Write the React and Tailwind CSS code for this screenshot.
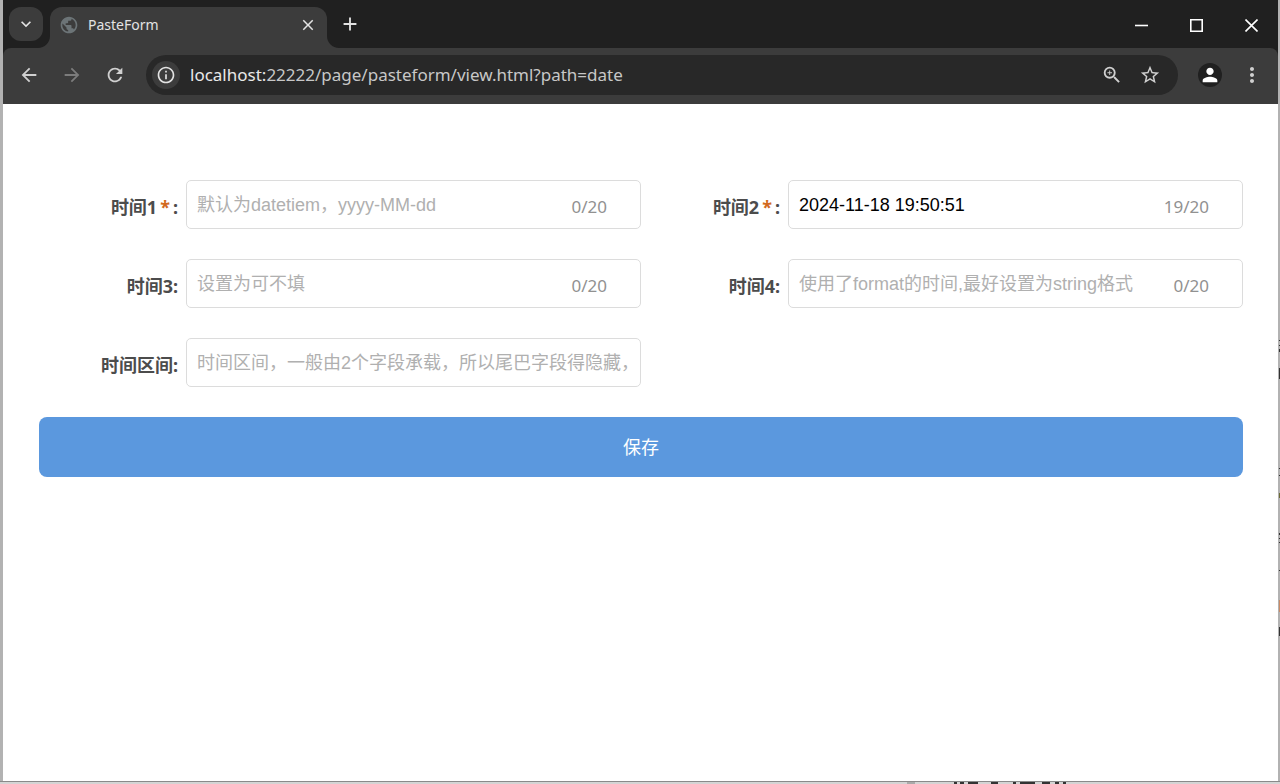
import { useState } from 'react';
import {
    MdAdd,
    MdArrowBack,
    MdArrowForward,
    MdClose,
    MdInfoOutline,
    MdKeyboardArrowDown,
    MdMoreVert,
    MdPerson,
    MdPublic,
    MdRefresh,
    MdStarOutline,
    MdZoomIn,
} from 'react-icons/md';

const FIELDS = [
    { name: 'time1', label: '时间1', required: true, placeholder: '默认为datetiem，yyyy-MM-dd', max: 20 },
    { name: 'time2', label: '时间2', required: true, value: '2024-11-18 19:50:51', max: 20 },
    { name: 'time3', label: '时间3', placeholder: '设置为可不填', max: 20 },
    { name: 'time4', label: '时间4', placeholder: '使用了format的时间,最好设置为string格式', max: 20 },
    { name: 'range', label: '时间区间', placeholder: '时间区间，一般由2个字段承载，所以尾巴字段得隐藏，时间' },
];

// Flared foot on either side of the active tab
const TabFoot = ({ flip }) => (
    <svg
        viewBox="0 0 12 12"
        className={flip ? 'size-3 self-end -scale-x-100' : 'size-3 self-end'}
        aria-hidden="true"
    >
        <path d="M12 0v12H0C6.6 12 12 6.6 12 0z" fill="#3c3c3c" />
    </svg>
);

const TitleBar = () => (
    <div className="flex h-12 bg-[#202020] pt-[7px] pl-[6px] text-[#e3e3e3]">
        <button
            type="button"
            aria-label="Search tabs"
            className="flex size-[34px] items-center justify-center rounded-xl bg-[#3c3c3c]"
        >
            <MdKeyboardArrowDown className="size-5" />
        </button>
        <div className="-ml-[5px] flex">
            <TabFoot />
            <div className="flex w-[277px] items-center rounded-t-xl bg-[#3c3c3c] pr-[10px] pb-[6px] pl-[9px]">
                <MdPublic className="size-5 text-[#6c7477]" />
                <span className="ml-[9px] flex-1 text-[14px] leading-5">PasteForm</span>
                <button type="button" aria-label="Close tab">
                    <MdClose className="size-[18px]" />
                </button>
            </div>
            <TabFoot flip />
        </div>
        <button type="button" aria-label="New tab" className="mb-[7px]">
            <MdAdd className="size-[22px]" />
        </button>
        <div className="ml-auto flex items-center gap-[42px] pr-5 pb-[5px] text-white">
            <button type="button" aria-label="Minimize">
                <svg viewBox="0 0 13 13" className="size-[13px]" stroke="currentColor" strokeWidth="1.6">
                    <path d="M0 6.5h13" />
                </svg>
            </button>
            <button type="button" aria-label="Maximize">
                <svg viewBox="0 0 13 13" className="size-[13px]" fill="none" stroke="currentColor" strokeWidth="1.6">
                    <path d="M.8.8h11.4v11.4H.8z" />
                </svg>
            </button>
            <button type="button" aria-label="Close">
                <svg viewBox="0 0 13 13" className="size-[13px]" stroke="currentColor" strokeWidth="1.6">
                    <path d="M.5.5l12 12M12.5.5l-12 12" />
                </svg>
            </button>
        </div>
    </div>
);

const Toolbar = () => (
    <div className="bg-[#202020]">
        <div className="flex h-14 items-center rounded-t-lg bg-[#3c3c3c] pr-[14px] pb-[2px] pl-[15px] text-[#d0d0d0]">
            <div className="flex gap-[21px]">
                <button type="button" aria-label="Back">
                    <MdArrowBack className="size-[22px]" />
                </button>
                <button type="button" aria-label="Forward" disabled className="text-[#7c7c7c]">
                    <MdArrowForward className="size-[22px]" />
                </button>
                <button type="button" aria-label="Reload">
                    <MdRefresh className="size-[22px]" />
                </button>
            </div>
            <div className="ml-5 flex h-10 flex-1 items-center rounded-full bg-[#282828] pr-[17px] pl-[6px]">
                <span className="flex size-7 items-center justify-center rounded-full bg-[#3c3c3c]">
                    <MdInfoOutline className="size-5 text-[#e3e3e3]" />
                </span>
                <p className="ml-[10px] flex-1 text-[17px] leading-6 text-[#c7c7c7]">
                    <span className="text-[#e8e8e8]">localhost:</span>
                    22222/page/pasteform/view.html?path=date
                </p>
                <div className="flex gap-4">
                    <button type="button" aria-label="Zoom">
                        <MdZoomIn className="size-[22px]" />
                    </button>
                    <button type="button" aria-label="Bookmark this tab">
                        <MdStarOutline className="size-[22px]" />
                    </button>
                </div>
            </div>
            <button
                type="button"
                aria-label="Profile"
                className="ml-5 flex size-6 items-center justify-center rounded-full bg-[#202020] text-white"
            >
                <MdPerson className="size-[22px]" />
            </button>
            <button type="button" aria-label="Menu" className="ml-[18px]">
                <MdMoreVert className="size-6" />
            </button>
        </div>
    </div>
);

const Field = ({ field }) => {
    const [value, setValue] = useState(field.value || '');

    return (
        <div className="flex items-center">
            <label
                htmlFor={field.name}
                className="w-[147px] shrink-0 pt-1 pr-2 text-right text-[18px] leading-6 font-bold text-[#4c4c4c]"
            >
                {field.label}
                {field.required && <span className="mx-[3px] text-[18px] text-[#d2691e]">*</span>}:
            </label>
            <div className="flex h-[49px] min-w-0 flex-1 items-center rounded-[5px] border border-[#dcdcdc] px-[10px]">
                <input
                    id={field.name}
                    type="text"
                    value={value}
                    maxLength={field.max}
                    placeholder={field.placeholder}
                    onChange={(e) => setValue(e.target.value)}
                    className="min-w-0 flex-1 font-['Liberation_Sans','Noto_Sans_CJK_SC',sans-serif] text-[18px] leading-6 text-black outline-none placeholder:text-[#b0b0b0]"
                />
                {field.max && (
                    <span className="mr-[23px] pt-1 text-[17px] leading-6 text-[#919191]">
                        {value.length}/{field.max}
                    </span>
                )}
            </div>
        </div>
    );
};

const App = () => {
    return (
        <div className="relative flex min-h-screen flex-col bg-[#b2b2b2] font-['Noto_Sans','Noto_Sans_CJK_SC',sans-serif]">
            <div className="mr-[2px] ml-[3px] flex flex-1 flex-col bg-white">
                <TitleBar />
                <Toolbar />
                <form className="pt-[76px] pr-[35px] pl-9" onSubmit={(e) => e.preventDefault()}>
                    <div className="grid grid-cols-2 gap-y-[30px]">
                        {FIELDS.map((field) => (
                            <Field key={field.name} field={field} />
                        ))}
                    </div>
                    <button
                        type="submit"
                        className="mt-[30px] h-[60px] w-full rounded-lg bg-[#5b98de] text-[18px] leading-6 text-white"
                    >
                        保存
                    </button>
                </form>
            </div>

            {/* Slivers of the desktop behind the window */}
            <div className="flex h-[3px] justify-end border-t border-[#8a8a8a] bg-[#d4d4d4]">
                <svg viewBox="0 0 374 2" className="h-[2px] w-[374px]" aria-hidden="true">
                    <path d="M1 0h8v2H1z" fill="#aaa" />
                    <path
                        d="M48 0h3v2h-3zM54 0h4v2h-4zM62 0h10v2H62zM85 0h7v2h-7zM107 0h3v2h-3zM114 0h15v2h-15zM136 0h8v2h-8zM149 0h4v2h-4zM157 0h3v2h-3z"
                        fill="#333"
                    />
                </svg>
            </div>
            <svg viewBox="0 0 2 300" className="absolute top-[340px] right-0 h-[300px] w-[2px]" aria-hidden="true">
                <path
                    d="M1 0h1v1H1zM1 5h1v1H1zM1 9h1v3H1zM1 28h1v11H1zM1 128h1v1H1zM1 135h1v1H1zM1 193h1v2H1zM1 198h1v1H1zM1 202h1v1H1zM1 230h1v1H1zM1 287h1v9H1z"
                    fill="#333"
                />
                <path d="M1 153h1v5H1z" fill="#6b6a35" />
                <path d="M1 260h1v12H1z" fill="#c98a66" />
            </svg>
        </div>
    );
};

export default App;
